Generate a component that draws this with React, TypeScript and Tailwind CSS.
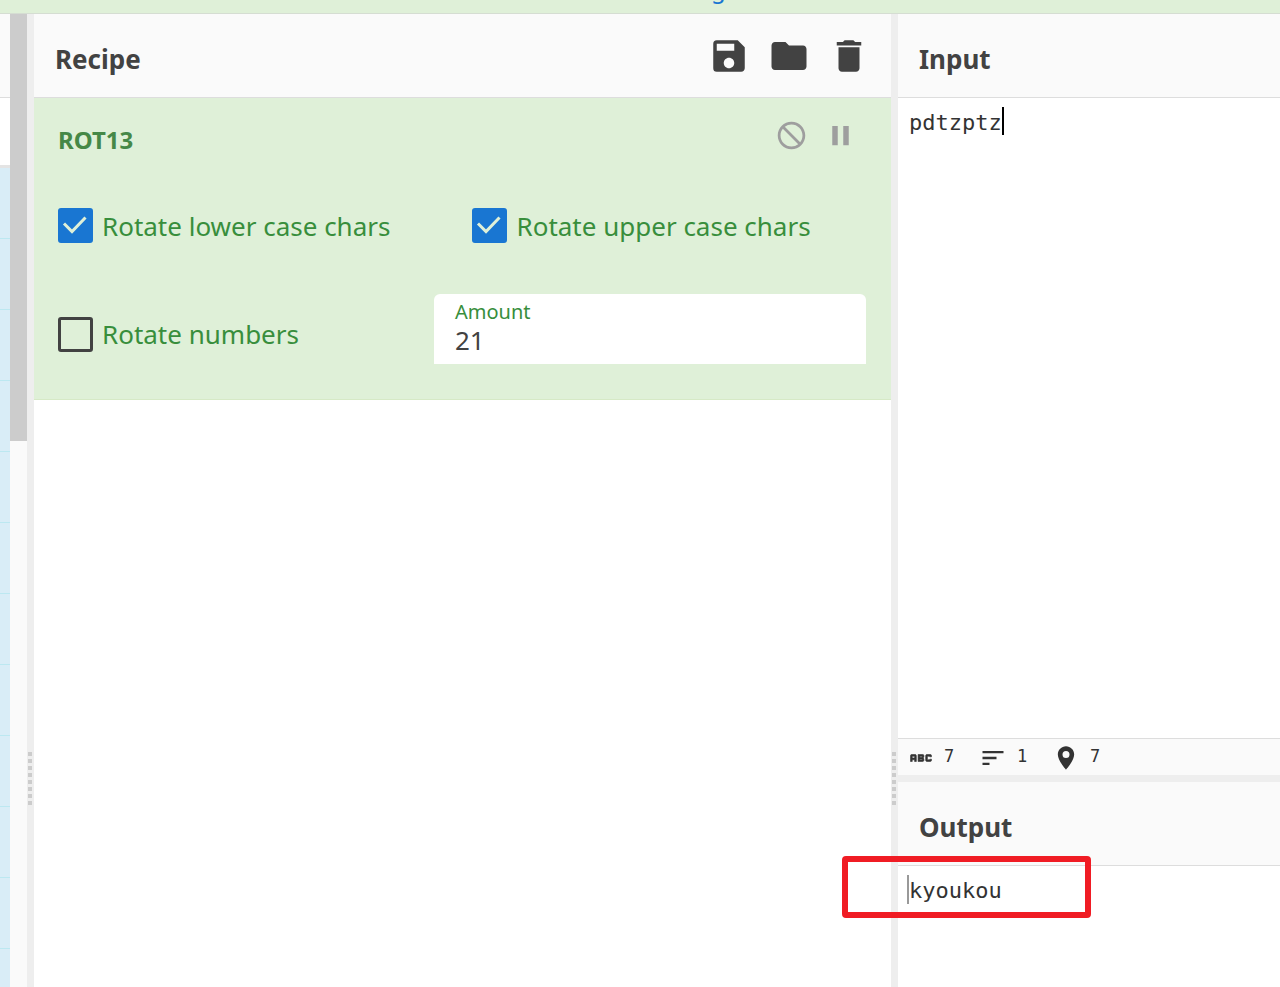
import { useState, type ReactNode } from "react";
import {
  MdAbc,
  MdDelete,
  MdFolder,
  MdNotInterested,
  MdPause,
  MdSave,
  MdSort,
} from "react-icons/md";

function Title({ children, actions }: { children: ReactNode; actions?: ReactNode }) {
  return (
    <header className="flex h-[84px] shrink-0 items-center justify-between border-b border-[#dddddd] bg-[#fafafa] pr-[21px] pl-[21px]">
      <h2 className="pt-1.5 text-[26px] leading-8 font-bold text-[#424242]">{children}</h2>
      {actions}
    </header>
  );
}

function Gutter() {
  return (
    <div className="flex flex-col items-start gap-[3px] bg-[#eeeeee] pt-[738px] pl-px">
      {Array.from({ length: 8 }, (_, i) => (
        <span key={i} className="size-1 shrink-0 bg-[#cccccc]" />
      ))}
    </div>
  );
}

function Check({ label, initial = false }: { label: string; initial?: boolean }) {
  const [checked, setChecked] = useState(initial);
  return (
    <label className="flex items-center gap-[9px] text-[26px] leading-9 whitespace-nowrap text-[#388e3c]">
      <span className="grid shrink-0">
        <input
          type="checkbox"
          checked={checked}
          onChange={(e) => setChecked(e.target.checked)}
          className="col-start-1 row-start-1 size-[35px] appearance-none rounded-[3px] border-3 border-[#424242] checked:border-[#1976d2] checked:bg-[#1976d2]"
        />
        {checked && (
          <svg
            viewBox="0 0 35 35"
            className="pointer-events-none col-start-1 row-start-1 size-[35px] fill-none stroke-[#dff0d8] stroke-3"
          >
            <path d="M6 15.5 14 23.5 27.5 9.5" />
          </svg>
        )}
      </span>
      {label}
    </label>
  );
}

function Operation() {
  const [amount, setAmount] = useState("21");
  return (
    <section className="border-b border-[#d6e9c6] bg-[#dff0d8] pr-[25px] pb-[35px] pl-6">
      <div className="flex h-[75px] items-center justify-between">
        <h3 className="pt-2 text-[24px] leading-8 font-bold text-[#468847]">ROT13</h3>
        <div className="flex gap-4 pr-[9px] text-[#9e9e9e]">
          <button type="button" aria-label="Disable operation">
            <MdNotInterested size={33} />
          </button>
          <button type="button" aria-label="Set breakpoint">
            <MdPause size={33} />
          </button>
        </div>
      </div>
      <div className="flex h-[105px] items-center gap-[82px]">
        <Check label="Rotate lower case chars" initial />
        <Check label="Rotate upper case chars" initial />
      </div>
      <div className="flex items-end justify-between pt-4">
        <div className="pb-3">
          <Check label="Rotate numbers" />
        </div>
        <div className="flex h-[70px] w-[432px] flex-col rounded-t-md bg-white px-[21px] pt-1">
          <label htmlFor="amount" className="text-[20px] leading-7 text-[#388e3c]">
            Amount
          </label>
          <input
            id="amount"
            inputMode="numeric"
            value={amount}
            onChange={(e) => setAmount(e.target.value)}
            className="h-7 w-full text-[26px] leading-7 text-[#424242] outline-none"
          />
        </div>
      </div>
    </section>
  );
}

function Status() {
  return (
    <footer className="flex h-[37px] shrink-0 items-center border-t border-[#dddddd] bg-[#fafafa] pt-0.5 pl-[9px] font-['DejaVu_Sans_Mono',monospace] text-[17px] leading-6 text-[#333333]">
      <MdAbc size={28} className="[&_path:last-child]:stroke-[#333333] [&_path:last-child]:stroke-[0.5]" />
      <span className="w-11 pb-1 pl-[9px]">7</span>
      <MdSort size={28} />
      <span className="w-[45px] pb-1 pl-[10px]">1</span>
      <svg viewBox="0 0 24 24" className="size-7 fill-[#333333]" fillRule="evenodd">
        <path d="M12 2C8.13 2 5 5.13 5 9c0 5.25 7 13 7 13s7-7.75 7-13c0-3.87-3.13-7-7-7zm0 10a3 3 0 1 1 0-6 3 3 0 0 1 0 6z" />
      </svg>
      <span className="pb-1 pl-[10px]">7</span>
    </footer>
  );
}

export default function App() {
  const [source, setSource] = useState("pdtzptz");
  return (
    <div className="flex h-screen flex-col overflow-hidden bg-white font-['Noto_Sans',sans-serif]">
      <div className="flex h-[14px] shrink-0 items-end justify-center overflow-hidden border-b border-[#d5ddd2] bg-[#dff0d8] pl-[157px]">
        <a href="#settings" className="pb-2 text-[24px] leading-8 text-[#1976d2]">
          g
        </a>
      </div>

      <main className="grid min-h-0 flex-1 grid-cols-[10px_17px_7px_857fr_7px_382fr]">
        <aside className="overflow-hidden">
          <div className="h-[84px] border-b border-[#dddddd] bg-[#fafafa]" />
          <div className="h-[70px] border-b-3 border-[#e4e4e4] bg-white" />
          {Array.from({ length: 12 }, (_, i) => (
            <div key={i} className="h-[71px] border-b border-[#bce8f1] bg-[#d9edf7]" />
          ))}
        </aside>
        <div className="bg-[#fafafa]">
          <div className="h-[427px] bg-[#cccccc]" />
        </div>
        <Gutter />

        <section className="min-w-0">
          <Title
            actions={
              <div className="flex gap-[18px] text-[#424242]">
                <button type="button" aria-label="Save recipe">
                  <MdSave size={42} />
                </button>
                <button type="button" aria-label="Load recipe">
                  <MdFolder size={42} />
                </button>
                <button type="button" aria-label="Clear recipe">
                  <MdDelete size={42} />
                </button>
              </div>
            }
          >
            Recipe
          </Title>
          <Operation />
        </section>
        <Gutter />

        <div className="grid min-w-0 grid-rows-[761fr_7px_205fr]">
          <section className="flex min-h-0 flex-col">
            <Title>Input</Title>
            <div className="flex flex-1 items-start pt-[9px] pl-[11px] font-['DejaVu_Sans_Mono',monospace] text-[22px] leading-8 text-[#333333]">
              <input
                aria-label="Input"
                value={source}
                size={7}
                onChange={(e) => setSource(e.target.value)}
                className="h-8 w-[7ch] outline-none"
              />
              <span className="h-7 w-[2px] bg-black" />
            </div>
            <Status />
          </section>
          <div className="bg-[#eeeeee]" />
          <section className="relative min-h-0">
            <Title>Output</Title>
            <div className="flex items-start pt-[9px] pl-[9px] font-['DejaVu_Sans_Mono',monospace] text-[22px] leading-8 text-[#333333]">
              <span className="h-[29px] w-[2px] bg-[#999999]" />
              <output>kyoukou</output>
            </div>
            <div className="pointer-events-none absolute top-[74px] -left-14 h-[62px] w-[249px] rounded-[4px] border-6 border-[#f01c24]" />
          </section>
        </div>
      </main>
    </div>
  );
}
